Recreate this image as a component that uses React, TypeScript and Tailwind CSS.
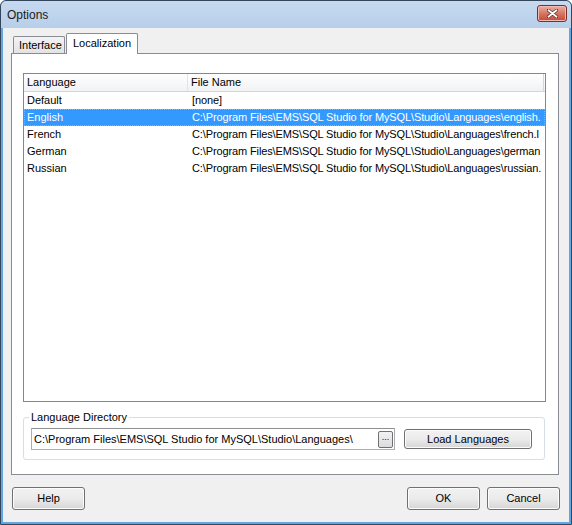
import React from "react";

const rows = [
  { lang: "Default", file: "[none]" },
  { lang: "English", file: "C:\\Program Files\\EMS\\SQL Studio for MySQL\\Studio\\Languages\\english.", selected: true },
  { lang: "French", file: "C:\\Program Files\\EMS\\SQL Studio for MySQL\\Studio\\Languages\\french.l" },
  { lang: "German", file: "C:\\Program Files\\EMS\\SQL Studio for MySQL\\Studio\\Languages\\german" },
  { lang: "Russian", file: "C:\\Program Files\\EMS\\SQL Studio for MySQL\\Studio\\Languages\\russian." },
];

function Button({ label, className }: { label: string; className: string }) {
  return (
    <div
      className={`flex items-center justify-center border border-[#707070] rounded-[3px] bg-gradient-to-b from-[#f2f2f2] via-[#ebebeb] to-[#d6d6d6] shadow-[inset_0_0_0_1px_#fcfcfc] text-black ${className}`}
    >
      {label}
    </div>
  );
}

export default function App() {
  return (
    <div className="w-[572px] h-[525px] border border-[#34465c] rounded-t-[6px] bg-[#62a6e2] flex flex-col font-['Liberation_Sans',Arial,sans-serif] text-[11px] leading-none text-black overflow-hidden">
      {/* Title bar */}
      <div className="h-[27px] shrink-0 flex items-start justify-between bg-gradient-to-b from-[#c6d9f0] to-[#b8cfea] rounded-t-[5px]">
        <span className="mt-[8px] ml-[6px] text-[12px] text-[#1b1b1b]">Options</span>
        <div className="mt-[4px] mr-[4px] w-[30px] h-[17px] rounded-[3px] border border-[#7a2f25] bg-gradient-to-b from-[#eab0a4] via-[#d77563] to-[#c4463a] flex items-center justify-center shadow-[inset_0_0_0_1px_#f0bcb0]">
          <svg width="11" height="9" viewBox="0 0 11 9">
            <path d="M1 1 L10 8 M10 1 L1 8" stroke="#5a2a24" strokeWidth="3.2" strokeLinecap="round" />
            <path d="M1.5 1.2 L9.5 7.8 M9.5 1.2 L1.5 7.8" stroke="#ffffff" strokeWidth="1.8" strokeLinecap="round" />
          </svg>
        </div>
      </div>

      {/* Client area */}
      <div className="flex-1 mx-[2px] mb-[2px] bg-[#f0f0f0] flex flex-col pl-[8px] pr-[10px] pt-[5px]">
        {/* Tabs */}
        <div className="h-[21px] flex items-end">
          <div className="ml-[2px] w-[52px] h-[18px] border border-[#898c95] border-b-0 rounded-t-[2px] bg-gradient-to-b from-[#f3f3f3] to-[#e2e2e2] flex items-center pl-[5px]">
            Interface
          </div>
          <div className="relative z-10 ml-px w-[72px] h-[21px] border border-[#898c95] border-b-0 rounded-t-[2px] bg-white flex items-center pl-[6px] pb-[2px]">
            Localization
          </div>
        </div>

        {/* Tab page */}
        <div className="-mt-px w-[548px] h-[422px] border border-[#898c95] bg-white pl-[11px] pt-[19px] flex flex-col">
          {/* List */}
          <div className="w-[523px] h-[329px] border border-[#828790] bg-white flex flex-col overflow-hidden">
            <div className="h-[18px] shrink-0 flex bg-gradient-to-b from-[#ffffff] to-[#f1f2f4] border-b border-[#d5d5d5]">
              <div className="w-[164px] border-r border-[#e3e4e6] pl-[3px] flex items-center">Language</div>
              <div className="flex-1 pl-[3px] flex items-center border-r border-[#d5d5d5] mr-px">File Name</div>
            </div>
            {rows.map((r) => (
              <div
                key={r.lang}
                className={`h-[17px] flex items-center whitespace-nowrap ${
                  r.selected ? "bg-[#3399ff] text-white border border-dotted border-[#d9a066]" : "border border-transparent"
                }`}
              >
                <div className="w-[164px] shrink-0 pl-[2px]">{r.lang}</div>
                <div className="pl-[3px] tracking-[-0.12px]">{r.file}</div>
              </div>
            ))}
          </div>

          {/* Group box */}
          <div className="relative mt-[15px] w-[522px] h-[43px] border border-[#d5dfe5] rounded-[3px] pl-[7px] pt-[10px] flex items-start">
            <span className="absolute -top-[6px] left-[5px] bg-white px-[2px]">Language Directory</span>
            <div className="w-[364px] h-[22px] border border-[#abadb3] border-t-[#8e8f8f] bg-white flex items-center justify-between pl-[2px] pr-[1px]">
              <span>C:\Program Files\EMS\SQL Studio for MySQL\Studio\Languages\</span>
              <div className="w-[15px] h-[17px] border border-[#707070] rounded-[2px] bg-gradient-to-b from-[#f2f2f2] to-[#dcdcdc] flex items-center justify-center text-[9px] pb-[3px]">
                ...
              </div>
            </div>
            <Button label="Load Languages" className="ml-[9px] mt-[1px] w-[128px] h-[20px]" />
          </div>
        </div>

        {/* Bottom buttons */}
        <div className="mt-[12px] -mr-px flex items-start">
          <Button label="Help" className="ml-[1px] w-[73px] h-[23px]" />
          <div className="flex-1" />
          <Button label="OK" className="w-[73px] h-[23px]" />
          <Button label="Cancel" className="ml-[7px] w-[73px] h-[23px]" />
        </div>
      </div>
    </div>
  );
}
